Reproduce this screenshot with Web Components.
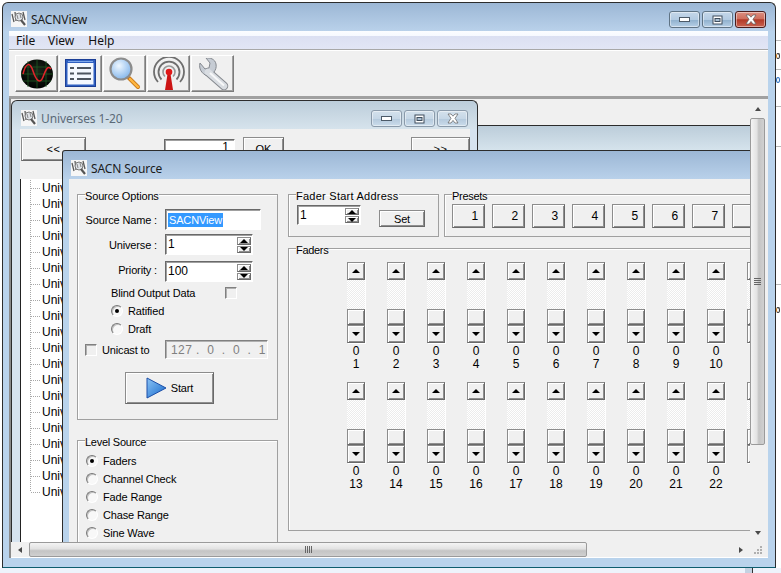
<!DOCTYPE html>
<html lang="en"><head><meta charset="utf-8"><title>SACNView</title>
<style>
html,body{margin:0;padding:0;width:781px;height:573px;overflow:hidden;background:#fff;font:11px "Liberation Sans",Arial,sans-serif;color:#000}
</style></head><body>
<x-desktop></x-desktop>
<script>
function def(name, css, html, init){
  customElements.define(name, class extends HTMLElement{
    constructor(){super();this.attachShadow({mode:'open'});}
    connectedCallback(){
      if(this._done)return;this._done=true;
      const a=n=>this.getAttribute(n);
      this.shadowRoot.innerHTML='<style>'+css+'</style>'+(typeof html==='function'?html(a,this):html);
      if(init)init(this,a);
    }
  });
}
const RAISED='background:#f0f0f0;box-sizing:border-box;border:1px solid;border-color:#8c8c8c #696969 #696969 #8c8c8c;box-shadow:inset 1px 1px #fff,inset -1px -1px #8f8f8f;';
const SUNKEN='box-sizing:border-box;border:1px solid;border-color:#696969 #fff #fff #696969;box-shadow:inset 1px 1px #a0a0a0;';

def('x-app-icon',':host{display:block;width:16px;height:16px;flex:none}svg{display:block}',
`<svg width="16" height="16" viewBox="0 0 16 16"><rect width="16" height="16" fill="#f6f6f6"/><path d="M1 3l2 8M4 1l1 9M12 1l2 8" stroke="#5a5a5a" stroke-width="1.3" fill="none"/><circle cx="8" cy="6" r="4" fill="#dfe3e8" stroke="#777"/><path d="M10 9l4 5" stroke="#555" stroke-width="2.2"/><path d="M6 4l1 4M9 3l1 4" stroke="#888"/></svg>`);

def('x-capbtn',`:host{display:block;width:31px;height:17px;flex:none;box-sizing:border-box;border:1px solid #5f7384;border-radius:3px;box-shadow:inset 0 0 0 1px rgba(255,255,255,.45);background:linear-gradient(#c5d7e9 0,#b3cbe2 50%,#8fb0cd 52%,#b6cfe6 100%);display:flex;align-items:center;justify-content:center}
:host([dim]){border-color:#8a9aaa;background:linear-gradient(#d4e1ec,#c6d7e6 50%,#b4c9dc 52%,#cbdceb)}
:host([kind=close]){border-color:#4a1c1c;background:linear-gradient(#dc8e80 0,#cf6f5e 45%,#b23a28 52%,#c96250 100%)}
:host([kind=close][dim]){border-color:#8a9aaa;background:linear-gradient(#d4e1ec,#c6d7e6 50%,#b4c9dc 52%,#cbdceb)}
svg{display:block}`,
(a)=>{const k=a('kind');
 if(k==='min')return `<svg width="12" height="7" viewBox="0 0 12 7"><rect x=".5" y="1.5" width="10" height="4" fill="#fff" stroke="#4c5a68"/></svg>`;
 if(k==='max')return `<svg width="12" height="10" viewBox="0 0 12 10"><rect x="1" y="1" width="9" height="8" fill="#fff" stroke="#3f4d5c"/><rect x="3" y="3.5" width="5" height="3" fill="#a9bfd3" stroke="#3f4d5c"/></svg>`;
 return `<svg width="14" height="11" viewBox="0 0 14 11"><path d="M2 1h3l2 2.2L9 1h3l-3 4.3L12 10H9L7 7.4 5 10H2l3-4.7z" fill="#fff" stroke="#5b5b5b" stroke-width=".7"/></svg>`;});

def('x-window',`:host{position:absolute;display:flex;flex-direction:column;box-sizing:border-box;border:1px solid #2c2c2c;border-bottom:0;border-radius:6px 6px 0 0;
 --t1:#9cb7d5;--t2:#b9d1ea;--side:#b9d3ec;
 background:linear-gradient(var(--t1),var(--t2) var(--th,29px),var(--side) var(--th,29px));
 padding:0 var(--pr,7px) 0 var(--pl,6px);color:#000}
:host([inactive]){--t1:#bccdda;--t2:#d6e3ec;--side:#d6e3ef}
.t{height:var(--th,29px);flex:none;display:flex;align-items:flex-start;box-sizing:border-box}
.ic{margin:var(--it,8px) 4px 0 var(--il,2px)}
.cap{flex:1;font:12px "Noto Sans","Liberation Sans",sans-serif;line-height:16px;margin-top:calc(var(--it,8px) + 1px);color:#1b1b1b;white-space:nowrap;letter-spacing:-.1px}
:host([inactive]) .cap{color:#5b6a78}
.b{display:flex;gap:2px;margin:var(--bt,8px) 2px 0 0}
.c{flex:1;min-height:0;background:#f0f0f0;display:flex;flex-direction:column;overflow:hidden}`,
(a)=>`<div class="t">${a('caption')?`<x-app-icon class="ic"></x-app-icon><div class="cap">${a('caption')}</div>`:''}${a('caps')!==null?`<div class="b"><x-capbtn kind="min" ${a('inactive')!==null?'dim':''}></x-capbtn><x-capbtn kind="max" ${a('inactive')!==null?'dim':''}></x-capbtn><x-capbtn kind="close" ${a('inactive')!==null?'dim':''}></x-capbtn></div>`:''}</div><div class="c"><slot></slot></div>`);

def('x-group',`:host{display:block;flex:none}
fieldset{margin:0;padding:0;box-sizing:border-box;height:100%;min-width:0;border:1px solid #a0a0a0;box-shadow:inset 1px 1px #fff}
legend{margin-left:7px;padding:0;height:13px;font:inherit;line-height:17px;letter-spacing:var(--ls,0)}`,
(a)=>`<fieldset><legend>${a('label')}</legend><slot></slot></fieldset>`);

def('x-btn',`:host{display:flex;align-items:center;justify-content:center;flex:none;gap:4px;${RAISED}}`,`<slot></slot>`);

def('x-spin',`:host{display:flex;flex:none;height:21px;${SUNKEN}background:#fff;padding:1px 1px 1px 2px;line-height:15px}
.v{flex:1;padding-top:1px;font-size:12px;letter-spacing:0}
.s{display:flex;flex-direction:column;width:14px;gap:1px;margin-top:1px}
.s i{flex:1;display:flex;align-items:center;justify-content:center;${RAISED}}
.u{width:0;height:0;border:4px solid transparent;border-top:0;border-bottom:4px solid #000}
.d{width:0;height:0;border:4px solid transparent;border-bottom:0;border-top:4px solid #000}`,
(a)=>`<div class="v">${a('value')}</div><div class="s"><i><b class="u"></b></i><i><b class="d"></b></i></div>`);

def('x-field',`:host{display:flex;align-items:center;flex:none;height:21px;${SUNKEN}background:#fff;padding-left:2px;font-size:11px}
span{background:#3399ff;color:#fff;padding:0 1px;line-height:14px}`,
(a)=>`<span>${a('value')}</span>`);

def('x-radio',`:host{display:flex;align-items:center;gap:5px;height:18px;white-space:nowrap}
i{width:12px;height:12px;flex:none;border-radius:50%;box-sizing:border-box;border:1px solid;border-color:#787878 #fff #fff #787878;background:#f8f8f8;box-shadow:inset 1px 1px #c0c0c0;display:flex;align-items:center;justify-content:center}
b{width:4px;height:4px;border-radius:50%;background:#000}`,
(a)=>`<i>${a('on')!==null?'<b></b>':''}</i><slot></slot>`);

def('x-check',`:host{display:block;width:12px;height:12px;flex:none;box-sizing:border-box;border:1px solid;border-color:#808080 #fff #fff #808080;box-shadow:inset 1px 1px #b0b0b0;background:#f0f0f0}`,``);

def('x-fader',`:host{display:flex;flex-direction:column;align-items:center;width:18px;flex:none;line-height:13px;text-align:center}
.s{width:18px;height:81px;flex:none;display:flex;flex-direction:column;box-shadow:1px 1px #fff;margin-bottom:2px}
.b{flex:none;height:18px;display:flex;align-items:center;justify-content:center;${RAISED}}
.k{flex:none;height:16px;${RAISED}}
.t{flex:none;height:29px;background:repeating-conic-gradient(#fff 0 25%,#ececec 0 50%) 0 0/2px 2px}
.u{width:0;height:0;border:4px solid transparent;border-top:0;border-bottom:4px solid #000}
.d{width:0;height:0;border:4px solid transparent;border-bottom:0;border-top:4px solid #000}
.n{height:13px;white-space:nowrap;font-size:12px;letter-spacing:0}`,
(a)=>`<div class="s"><div class="b"><i class="u"></i></div><div class="t"></div><div class="k"></div><div class="b"><i class="d"></i></div></div>${a('n')?`<div class="n">0</div><div class="n">${a('n')}</div>`:''}`);

def('x-scroll',`:host{display:flex;background:#f0f0f0;box-sizing:border-box}
:host([dir=v]){flex-direction:column;width:15px}
:host([dir=h]){flex-direction:row;height:15px}
.a{flex:none;display:flex;align-items:center;justify-content:center}
:host([dir=v]) .a{height:19px}
:host([dir=h]) .a{width:18px}
.th{flex:none;box-sizing:border-box;border:1px solid #9a9a9a;border-radius:2px;display:flex;align-items:center;justify-content:center}
:host([dir=v]) .th{height:327px;background:linear-gradient(90deg,#f4f4f4,#e2e2e2 45%,#c4c4c4 60%,#d0d0d0)}
:host([dir=h]) .th{width:558px;background:linear-gradient(#f4f4f4,#e2e2e2 45%,#c4c4c4 60%,#d0d0d0)}
.g{flex:1}
i{display:block;width:0;height:0;border:3px solid transparent}
.up{border-top:0;border-bottom:4px solid #4a4a4a}.dn{border-bottom:0;border-top:4px solid #4a4a4a}
.lf{border-left:0;border-right:4px solid #4a4a4a}.rt{border-right:0;border-left:4px solid #4a4a4a}
.grip{display:block}`,
(a)=>a('dir')==='v'
 ?`<div class="a"><i class="up"></i></div><div class="th"><svg class="grip" width="7" height="7" viewBox="0 0 7 7"><path d="M0 .5h7M0 2.5h7M0 4.5h7M0 6.5h7" stroke="#666"/></svg></div><div class="g"></div><div class="a"><i class="dn"></i></div>`
 :`<div class="a"><i class="lf"></i></div><div class="th"><svg class="grip" width="7" height="7" viewBox="0 0 7 7"><path d="M.5 0v7M2.5 0v7M4.5 0v7M6.5 0v7" stroke="#666"/></svg></div><div class="g"></div><div class="a"><i class="rt"></i></div>`);

const TOOL={
scope:`<svg width="36" height="32" viewBox="0 0 36 32"><defs><radialGradient id="sg" cx=".5" cy=".4" r=".6"><stop offset="0" stop-color="#1c2a1c"/><stop offset="1" stop-color="#000"/></radialGradient></defs><ellipse cx="18" cy="16" rx="16" ry="14.5" fill="url(#sg)"/><path d="M4 9h28M2 16h32M4 23h28M9 3v26M18 2v28M27 3v26" stroke="#1f5a25" stroke-width=".8"/><path d="M4 16C7 4 11 4 14 13s7 14 10 6 5-12 8-8" fill="none" stroke="#e3242b" stroke-width="1.5"/></svg>`,
list:`<svg width="32" height="29" viewBox="0 0 32 29"><rect x=".5" y=".5" width="30" height="27" fill="#2f5fc0" stroke="#1c3f96"/><rect x="2.5" y="4" width="26" height="21.5" fill="#f4f8ff"/><path d="M3 2.5h25" stroke="#7fa8ea"/><path d="M5 9h4M12 9h14M5 14.5h4M12 14.5h14M5 20h4M12 20h14" stroke="#4d5560" stroke-width="2"/></svg>`,
search:`<svg width="32" height="33" viewBox="0 0 32 33"><defs><radialGradient id="lg" cx=".4" cy=".35" r=".7"><stop offset="0" stop-color="#eef7ff"/><stop offset="1" stop-color="#7fb3ea"/></radialGradient></defs><path d="M20 21l9 9" stroke="#c8781a" stroke-width="4" stroke-linecap="round"/><path d="M21 22l8 8" stroke="#ffb640" stroke-width="2.400" stroke-linecap="round"/><circle cx="12" cy="12" r="10.500" fill="url(#lg)" stroke="#8c8c8c" stroke-width="2.200"/></svg>`,
antenna:`<svg width="34" height="34" viewBox="0 0 34 34"><g fill="none" stroke="#6e6e6e"><path d="M6 25A15 15 0 1 1 28 25" stroke-width="1.800"/><path d="M9.500 22.500A10.500 10.500 0 1 1 24.500 22.500" stroke-width="1.800"/><path d="M13 19.500A6 6 0 1 1 21 19.500" stroke-width="1.600" stroke="#999"/></g><path d="M15.500 17h3L21 33H13z" fill="#cc1414"/><circle cx="17" cy="15" r="3.300" fill="#e01818"/></svg>`,
wrench:`<svg width="32" height="32" viewBox="0 0 32 32"><path d="M11 14l16 14" stroke="#85898f" stroke-width="8.500" stroke-linecap="round"/><path d="M3 5l5 6 4-1 1-5-4-5C13-.5 18 1 19 6c.7 3.500-.5 6-2 8l-5 4C7 18 1 12 3 5z" fill="#c6ccd4" stroke="#85898f"/><path d="M11 14l16 14" stroke="#d9dde2" stroke-width="6.500" stroke-linecap="round"/><path d="M13 15l14 12.500" stroke="#f7f8f9" stroke-width="2"/></svg>`};
def('x-tool',`:host{display:flex;align-items:center;justify-content:center;width:43px;height:37px;flex:none;box-sizing:border-box;background:#f0f0f0;border:1px solid;border-color:#fff #7c7c7c #7c7c7c #fff;box-shadow:inset -1px -1px #a0a0a0}svg{display:block}`,
(a)=>TOOL[a('icon')]);

def('x-universes',`:host{display:flex;flex-direction:column;flex:1;min-height:0}
.top{display:flex;height:24px;margin:8px 0 18px 1px;flex:none}
.l{width:65px;height:24px;letter-spacing:.5px}
.f{width:72px;height:24px;margin:2px 8px 0 78px;text-align:right;padding:1px 5px 0;${SUNKEN}background:#fff;font-size:12px;line-height:13px}
.ok{width:41px;height:24px}
.r{width:59px;height:24px;margin-left:127px;letter-spacing:.5px}
.tree{flex:1;background:#fff;border-left:1px solid #222;padding:1px 0 0}`,
()=>{let t='';for(let i=0;i<20;i++)t+=`<x-tree-row${i===19?' last':''}>Univ</x-tree-row>`;
 return `<div class="top"><x-btn class="l">&lt;&lt;</x-btn><div class="f">1</div><x-btn class="ok">OK</x-btn><x-btn class="r">&gt;&gt;</x-btn></div><div class="tree">${t}</div>`;});

def('x-tree-row',`:host{display:flex;align-items:center;height:16px;line-height:16px;font-size:12px;position:relative}
.v{width:1px;height:16px;margin-left:9px;background:repeating-linear-gradient(#a8a8a8 0 1px,transparent 1px 2px)}
:host([last]) .v{height:8px;align-self:flex-start}
.h{width:10px;height:1px;margin-right:1px;background:repeating-linear-gradient(90deg,#a8a8a8 0 1px,transparent 1px 2px)}`,
`<i class="v"></i><i class="h"></i><slot></slot>`);

def('x-source',`:host{display:flex;flex:1;min-height:0;align-items:flex-start;padding-top:9px;letter-spacing:-.15px}
.lc{display:flex;flex-direction:column;width:201px;margin-left:8px;flex:none}
.rc{display:flex;flex-direction:column;margin-left:10px;width:480px;flex:none}
.so{height:232px;--ls:-.15px}.ls{height:130px;margin-top:14px;--ls:-.25px}
.row{display:flex;align-items:center}
.lb{width:79px;text-align:right;margin-right:8px;flex:none;white-space:nowrap}
.up{margin-bottom:4px}
.name{width:96px}.sp{width:88px}
.nw{white-space:nowrap;flex:none}
.ip{width:103px;height:19px;flex:none;display:flex;align-items:center;box-sizing:border-box;border:1px solid;border-color:#808080 #fff #fff #808080;box-shadow:inset 1px 1px #b0b0b0;color:#808080;font-size:12px;padding-left:5px;margin-left:15px;white-space:nowrap;letter-spacing:.4px}
.start{width:89px;height:32px;margin:13px 0 0 47px;font-size:11px}
.top{display:flex;gap:5px;height:49px}
.fs{width:151px;height:49px;--ls:.25px}.pr{width:323px;height:49px;--ls:-.3px}
.fsb{display:flex;align-items:flex-start;margin:4px 0 0 8px}
.fsb x-spin{width:64px;height:20px}
.set{width:46px;height:17px;margin:5px 0 0 18px}
.prb{display:flex;gap:7px;margin:3px 0 0 7px}
.prb x-btn{width:33px;height:24px;justify-content:flex-end;padding-right:6px;font-size:12px}
.fd{height:289px;margin-top:5px;--ls:-.3px}
.grid{display:grid;grid-template-columns:repeat(11,18px);column-gap:22px;row-gap:11px;margin:7px 0 0 58px}
.rd{margin-left:8px}`,
()=>{
 const p=[1,2,3,4,5,6,7].map(n=>`<x-btn>${n}</x-btn>`).join('')+'<x-btn></x-btn>';
 const f=o=>[...Array(11)].map((_,i)=>`<x-fader ${i<10?`n="${o+i}"`:''}></x-fader>`).join('');
 return `<div class="lc">
 <x-group class="so" label="Source Options">
  <div class="row" style="margin-top:8px"><div class="lb">Source Name :</div><x-field class="name" value="SACNView"></x-field></div>
  <div class="row" style="margin-top:4px"><div class="lb">Universe :</div><x-spin class="sp" value="1"></x-spin></div>
  <div class="row" style="margin-top:6px"><div class="lb up">Priority :</div><x-spin class="sp" value="100"></x-spin></div>
  <div class="row" style="margin:4px 0 0 33px;height:14px"><span class="nw" style="width:114px">Blind Output Data</span><x-check></x-check></div>
  <div style="margin:2px 0 0 33px"><x-radio on>Ratified</x-radio><x-radio>Draft</x-radio></div>
  <div class="row" style="margin:2px 0 0 7px;height:19px"><x-check></x-check><span class="nw" style="margin-left:5px;width:48px">Unicast to</span><div class="ip">127&nbsp;.&nbsp;&nbsp;0&nbsp;&nbsp;.&nbsp;&nbsp;0&nbsp;&nbsp;.&nbsp;&nbsp;1</div></div>
  <x-btn class="start"><svg width="21" height="22" viewBox="0 0 21 22"><defs><linearGradient id="pg" x1="0" y1="0" x2="1" y2="1"><stop offset="0" stop-color="#8cc4f5"/><stop offset="1" stop-color="#1568cc"/></linearGradient></defs><path d="M1 1l19 10L1 21z" fill="url(#pg)" stroke="#1c4fa8"/></svg>Start</x-btn>
 </x-group>
 <x-group class="ls" label="Level Source">
  <div class="rd" style="margin-top:5px"><x-radio on>Faders</x-radio><x-radio>Channel Check</x-radio><x-radio>Fade Range</x-radio><x-radio>Chase Range</x-radio><x-radio>Sine Wave</x-radio></div>
 </x-group></div>
 <div class="rc"><div class="top">
  <x-group class="fs" label="Fader Start Address"><div class="fsb"><x-spin value="1"></x-spin><x-btn class="set">Set</x-btn></div></x-group>
  <x-group class="pr" label="Presets"><div class="prb">${p}</div></x-group></div>
  <x-group class="fd" label="Faders"><div class="grid">${f(1)}${f(13)}</div></x-group>
 </div>`;});

def('x-desktop',`:host{display:block;position:relative;width:781px;height:573px;overflow:hidden;background:linear-gradient(#fff 0 568px,#eef3fb 568px)}
.main{left:2px;top:2px;width:774px;height:566px;--th:28px;--pl:6px;--pr:7px;--it:8px;--il:2px;--bt:8px;border-bottom:1px solid #0d5d6e;padding-bottom:9px}
.menu{height:18px;flex:none;display:flex;gap:14px;padding-left:7px;align-items:center;background:linear-gradient(#fbfdff 0,#f6f9ff 28%,#dbe0f2 30%,#e2e6f5 100%);font:12px "Noto Sans","Liberation Sans",sans-serif;color:#111}
.menu span:first-child{width:18px}
.tb{height:49px;flex:none;box-sizing:border-box;display:flex;gap:1px;padding:5px 0 0 6px;border-top:1px solid #a8a8a8;border-bottom:2px solid #a0a0a0;box-shadow:inset 0 1px #fff;background:#f0f0f0}
.mdi{flex:1;min-height:0;display:grid;grid-template-columns:739px 15px;grid-template-rows:1fr 15px;border-left:2px solid #8a8a8a;border-top:1px solid #a0a0a0;padding-right:3px;background:#f0f0f0;box-shadow:inset 0 -1px #fff;padding-bottom:1px}
.canvas{position:relative;overflow:hidden;background:#f0f0f0}
.corner{position:relative;background:#f0f0f0}
.corner svg{display:block;margin:4px 0 0 4px}
.bg{left:300px;top:26px;width:600px;height:500px;--th:24px;border-radius:0;border-left:0;background:linear-gradient(#bccdda,#d5e3ec 24px,#f0f0f0 24px)}
.uni{left:0;top:1px;width:467px;height:500px;--pl:8px;--pr:7px;--il:1px;--it:9px;--bt:9px}
.src{left:51px;top:51px;width:730px;height:420px;--pl:6px;--il:2px;--it:9px;border-radius:3px 0 0 0}
.edge{position:absolute;left:776px;width:5px;height:1px;background:#b8b8b8}
.frag{position:absolute;left:776px;width:4px;height:6px;box-sizing:border-box;border:1px solid #333;border-radius:50%;border-left-color:#d08020}
.tick{position:absolute;left:752px;top:568px;width:1px;height:5px;background:#333}
.tick2{position:absolute;left:745px;top:568px;width:7px;height:5px;background:#c4d2e2}`,
`<i class="edge" style="top:40px"></i><i class="edge" style="top:69px"></i><i class="edge" style="top:106px"></i><i class="edge" style="top:146px"></i><i class="edge" style="top:284px"></i><i class="frag" style="top:53px"></i><i class="frag" style="top:77px;border-color:#2a6fc0"></i><i class="frag" style="top:307px"></i><i class="tick2"></i><i class="tick"></i>
<x-window class="main" caption="SACNView" caps>
 <div class="menu"><span>File</span><span>View</span><span>Help</span></div>
 <div class="tb"><x-tool icon="scope"></x-tool><x-tool icon="list"></x-tool><x-tool icon="search"></x-tool><x-tool icon="antenna"></x-tool><x-tool icon="wrench"></x-tool></div>
 <div class="mdi">
  <div class="canvas">
   <x-window class="bg" inactive></x-window>
   <x-window class="uni" caption="Universes 1-20" caps inactive><x-universes></x-universes></x-window>
   <x-window class="src" caption="SACN Source"><x-source></x-source></x-window>
  </div>
  <x-scroll dir="v"></x-scroll>
  <x-scroll dir="h"></x-scroll>
  <div class="corner"><svg width="9" height="9" viewBox="0 0 9 9" fill="#b0b0b0"><rect x="6" y="0" width="2" height="2"/><rect x="3" y="3" width="2" height="2"/><rect x="6" y="3" width="2" height="2"/><rect x="0" y="6" width="2" height="2"/><rect x="3" y="6" width="2" height="2"/><rect x="6" y="6" width="2" height="2"/></svg></div>
 </div>
</x-window>`);
</script></body></html>
